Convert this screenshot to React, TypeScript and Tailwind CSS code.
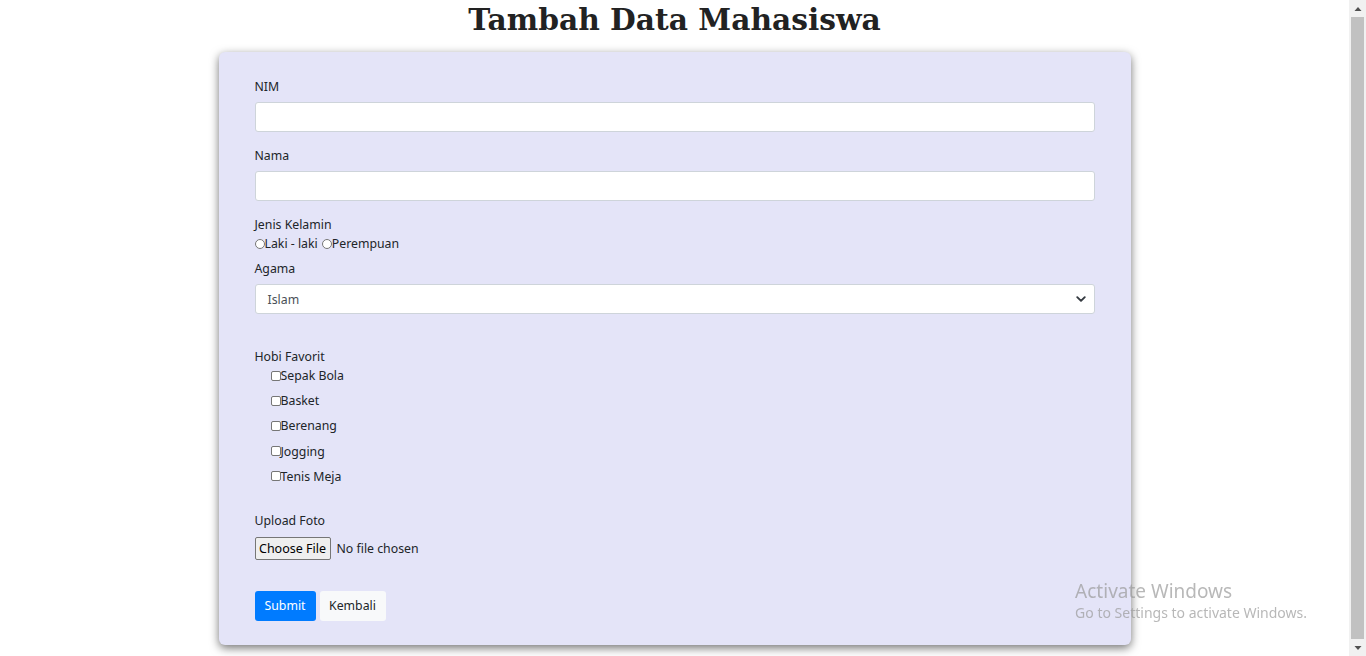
export default function App() {
  const hobbies = ["Sepak Bola", "Basket", "Berenang", "Jogging", "Tenis Meja"];

  return (
    <div className="flex h-[656px] overflow-hidden bg-white text-[#212529] font-['Noto_Sans',sans-serif] text-[12.3px] leading-[19px]">
      <main className="flex-1">
        <h1 className="text-center font-['DejaVu_Serif',serif] font-bold text-[29.7px] leading-[40px] text-[#222]">
          Tambah Data Mahasiswa
        </h1>

        <div className="mx-auto mt-[12px] w-[912px] rounded-[6px] bg-[#e4e4f8] px-[36px] pt-[25px] pb-[24px] shadow-[0_3px_10px_rgba(0,0,0,0.55)]">
          <label className="block">NIM</label>
          <input
            type="text"
            className="mt-[6px] block h-[30px] w-full rounded-[3px] border border-[#ced4da] bg-white px-3"
          />

          <label className="mt-[14px] block">Nama</label>
          <input
            type="text"
            className="mt-[6px] block h-[30px] w-full rounded-[3px] border border-[#ced4da] bg-white px-3"
          />

          <label className="mt-[14px] block">Jenis Kelamin</label>
          <div className="flex items-center">
            <input
              type="radio"
              name="jk"
              className="m-0 h-[10px] w-[10px] appearance-none rounded-full border border-[#767676] bg-white"
            />
            <span>Laki - laki</span>
            <input
              type="radio"
              name="jk"
              className="m-0 ml-[4px] h-[10px] w-[10px] appearance-none rounded-full border border-[#767676] bg-white"
            />
            <span>Perempuan</span>
          </div>

          <label className="mt-[6px] block">Agama</label>
          <div className="mt-[6px] flex h-[30px] w-full items-center rounded-[3px] border border-[#ced4da] bg-white pl-[12px] pr-2 text-[#495057]">
            <span className="flex-1">Islam</span>
            <svg
              className="h-[10px] w-[10px] text-[#343a40]"
              viewBox="0 0 16 16"
              fill="none"
              stroke="currentColor"
              strokeWidth="3"
              strokeLinecap="round"
              strokeLinejoin="round"
            >
              <path d="M2 5l6 6 6-6" />
            </svg>
          </div>

          <label className="mt-[33px] block">Hobi Favorit</label>
          <div className="flex flex-col gap-[6.2px] pl-[16px]">
            {hobbies.map((h) => (
              <label key={h} className="flex items-center">
                <input
                  type="checkbox"
                  className="m-0 h-[10px] w-[10px] appearance-none rounded-[2px] border border-[#767676] bg-white"
                />
                <span>{h}</span>
              </label>
            ))}
          </div>

          <label className="mt-[25px] block">Upload Foto</label>
          <div className="mt-[7px] flex items-center gap-[6px]">
            <button className="h-[23px] w-[76px] rounded-[2px] border border-[#767676] bg-[#efefef] text-[12.5px] text-black">
              Choose File
            </button>
            <span>No file chosen</span>
          </div>

          <div className="mt-[31px] flex gap-[4px]">
            <button className="h-[30px] w-[61px] rounded-[3px] bg-[#007bff] text-white">
              Submit
            </button>
            <button className="h-[30px] w-[66px] rounded-[3px] bg-[#f8f9fa] text-[#212529]">
              Kembali
            </button>
          </div>
        </div>
      </main>

      <div className="flex w-[17px] flex-col bg-[#f1f1f1]">
        <div className="flex h-[17px] items-center justify-center">
          <svg className="h-[8px] w-[8px] text-[#505050]" viewBox="0 0 8 8" fill="currentColor">
            <path d="M0.5 6L4 2l3.5 4z" />
          </svg>
        </div>
        <div className="mx-[2px] flex-1 bg-[#c1c1c1]" />
        <div className="flex h-[17px] items-center justify-center">
          <svg className="h-[8px] w-[8px] text-[#505050]" viewBox="0 0 8 8" fill="currentColor">
            <path d="M0.5 2L4 6l3.5-4z" />
          </svg>
        </div>
      </div>

      <div className="pointer-events-none fixed bottom-[33px] right-[59px] text-[#9a9a9a] opacity-70">
        <div className="text-[19px] leading-[24px]">Activate Windows</div>
        <div className="text-[14px] leading-[20px]">Go to Settings to activate Windows.</div>
      </div>
    </div>
  );
}
